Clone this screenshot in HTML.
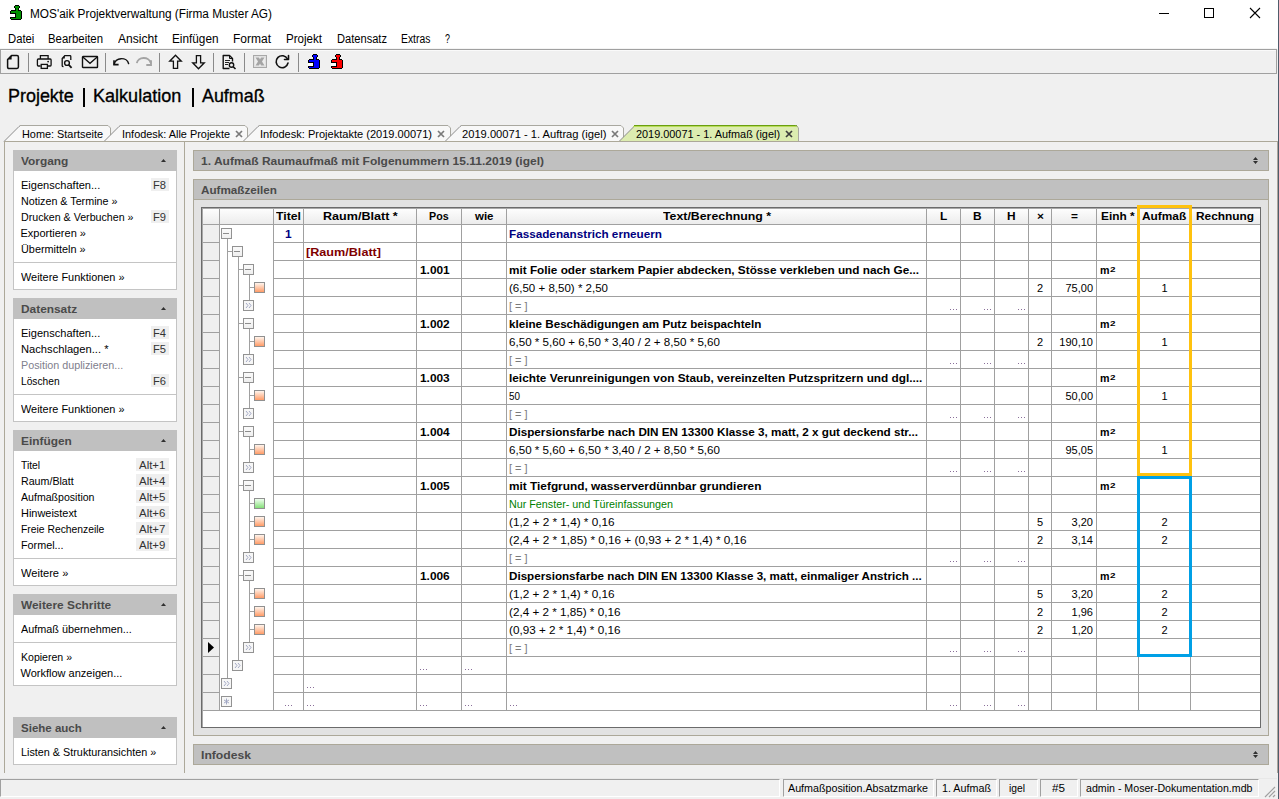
<!DOCTYPE html>
<html><head><meta charset="utf-8"><title>MOS'aik</title>
<style>
html,body{margin:0;padding:0;}
body{width:1279px;height:799px;overflow:hidden;position:relative;background:#f0f0f0;font-family:"Liberation Sans",sans-serif;}
body>div,body>svg{position:absolute;}
.t{white-space:pre;line-height:1;transform-origin:0 0;}
</style></head><body>
<div style="left:0px;top:0px;width:1279px;height:49px;background:#fff"></div>
<div style="left:1278px;top:0px;width:1px;height:799px;background:#4f5c6b"></div>
<svg style="left:10px;top:5px" width="12" height="15" viewBox="0 0 12 15" shape-rendering="crispEdges"><rect x="5" y="0" width="4" height="1" fill="#000"/><rect x="4" y="1" width="1" height="1" fill="#000"/><rect x="5" y="1" width="4" height="1" fill="#009000"/><rect x="9" y="1" width="1" height="1" fill="#000"/><rect x="4" y="2" width="1" height="1" fill="#000"/><rect x="5" y="2" width="4" height="1" fill="#009000"/><rect x="9" y="2" width="1" height="1" fill="#000"/><rect x="5" y="3" width="1" height="1" fill="#000"/><rect x="6" y="3" width="2" height="1" fill="#009000"/><rect x="8" y="3" width="1" height="1" fill="#000"/><rect x="5" y="4" width="1" height="1" fill="#000"/><rect x="6" y="4" width="2" height="1" fill="#009000"/><rect x="8" y="4" width="1" height="1" fill="#000"/><rect x="1" y="5" width="5" height="1" fill="#000"/><rect x="6" y="5" width="2" height="1" fill="#009000"/><rect x="8" y="5" width="3" height="1" fill="#000"/><rect x="0" y="6" width="1" height="1" fill="#000"/><rect x="1" y="6" width="10" height="1" fill="#009000"/><rect x="11" y="6" width="1" height="1" fill="#000"/><rect x="0" y="7" width="1" height="1" fill="#000"/><rect x="1" y="7" width="10" height="1" fill="#009000"/><rect x="11" y="7" width="1" height="1" fill="#000"/><rect x="0" y="8" width="6" height="1" fill="#000"/><rect x="6" y="8" width="5" height="1" fill="#009000"/><rect x="11" y="8" width="1" height="1" fill="#000"/><rect x="0" y="9" width="5" height="1" fill="#fff"/><rect x="5" y="9" width="1" height="1" fill="#000"/><rect x="6" y="9" width="5" height="1" fill="#009000"/><rect x="11" y="9" width="1" height="1" fill="#000"/><rect x="0" y="10" width="5" height="1" fill="#fff"/><rect x="5" y="10" width="1" height="1" fill="#000"/><rect x="6" y="10" width="5" height="1" fill="#009000"/><rect x="11" y="10" width="1" height="1" fill="#000"/><rect x="0" y="11" width="5" height="1" fill="#fff"/><rect x="5" y="11" width="1" height="1" fill="#000"/><rect x="6" y="11" width="5" height="1" fill="#009000"/><rect x="11" y="11" width="1" height="1" fill="#000"/><rect x="0" y="12" width="6" height="1" fill="#000"/><rect x="6" y="12" width="5" height="1" fill="#009000"/><rect x="11" y="12" width="1" height="1" fill="#000"/><rect x="0" y="13" width="1" height="1" fill="#000"/><rect x="1" y="13" width="10" height="1" fill="#009000"/><rect x="11" y="13" width="1" height="1" fill="#000"/><rect x="1" y="14" width="10" height="1" fill="#000"/></svg>
<div class="t" style="left:29.50px;top:8px;font-size:12px;color:#000;transform:scaleX(0.9850);">MOS&#x27;aik Projektverwaltung (Firma Muster AG)</div>
<div style="left:1159px;top:13px;width:10px;height:1px;background:#000"></div>
<div style="left:1204px;top:8px;width:10px;height:10px;border:1px solid #000;box-sizing:border-box"></div>
<svg style="left:1249px;top:7px" width="12" height="12" viewBox="0 0 12 12"><path d="M1 1L11 11M11 1L1 11" stroke="#000" stroke-width="1.1"/></svg>
<div class="t" style="left:7.70px;top:33px;font-size:12px;color:#000;transform:scaleX(0.9388);">Datei</div>
<div class="t" style="left:48.00px;top:33px;font-size:12px;color:#000;transform:scaleX(0.9475);">Bearbeiten</div>
<div class="t" style="left:118.00px;top:33px;font-size:12px;color:#000;transform:scaleX(1.0063);">Ansicht</div>
<div class="t" style="left:172.00px;top:33px;font-size:12px;color:#000;transform:scaleX(0.9815);">Einfügen</div>
<div class="t" style="left:233.00px;top:33px;font-size:12px;color:#000;">Format</div>
<div class="t" style="left:285.60px;top:33px;font-size:12px;color:#000;transform:scaleX(0.9639);">Projekt</div>
<div class="t" style="left:336.90px;top:33px;font-size:12px;color:#000;transform:scaleX(0.9254);">Datensatz</div>
<div class="t" style="left:401.40px;top:33px;font-size:12px;color:#000;transform:scaleX(0.8615);">Extras</div>
<div class="t" style="left:444.80px;top:33px;font-size:12px;color:#000;transform:scaleX(0.7492);">?</div>
<div style="left:0px;top:48px;width:1277px;height:1px;background:#f4f4f4"></div>
<div style="left:0px;top:49px;width:1277px;height:25px;background:#f0f0f0;border:1px solid #a0a0a0;box-sizing:border-box"></div>
<div style="left:1px;top:50px;width:1275px;height:1px;background:#fafafa"></div>
<div style="left:28px;top:53px;width:1px;height:19px;background:#8a8a8a"></div>
<div style="left:105px;top:53px;width:1px;height:19px;background:#8a8a8a"></div>
<div style="left:159px;top:53px;width:1px;height:19px;background:#8a8a8a"></div>
<div style="left:213px;top:53px;width:1px;height:19px;background:#8a8a8a"></div>
<div style="left:244px;top:53px;width:1px;height:19px;background:#8a8a8a"></div>
<div style="left:298px;top:53px;width:1px;height:19px;background:#8a8a8a"></div>
<svg style="left:6px;top:54px" width="16" height="16" viewBox="0 0 16 16"><path d="M5.5 1.6 H11 Q12.4 1.6 12.4 3 V13.1 Q12.4 14.5 11 14.5 H3 Q1.6 14.5 1.6 13.1 V5.5 Z" stroke="#111" stroke-width="1.5" fill="none" stroke-linejoin="round"/><path d="M1.6 5.6 L5.6 1.6 L5.6 5.6 Z" fill="#111"/></svg>
<svg style="left:36px;top:54px" width="17" height="16" viewBox="0 0 17 16"><path d="M4.4 5 V1.6 H12.1 V5" stroke="#111" stroke-width="1.3" fill="none"/><path d="M4.6 12 H2.3 Q1.4 12 1.4 11.1 V5.9 Q1.4 5 2.3 5 H14.2 Q15.1 5 15.1 5.9 V11.1 Q15.1 12 14.2 12 H12" stroke="#111" stroke-width="1.3" fill="none"/><rect x="5.2" y="10.4" width="6.2" height="4" stroke="#111" stroke-width="1.3" fill="none"/><circle cx="12.1" cy="7.6" r="0.9" fill="#111"/></svg>
<svg style="left:60px;top:54px" width="15" height="16" viewBox="0 0 15 16"><path d="M2.2 12 V4.5 L4.8 1.6 H10 Q10.8 1.6 10.8 2.4 V6" stroke="#111" stroke-width="1.3" fill="none"/><path d="M2.2 12 Q2.2 12.6 3.5 12.6" stroke="#111" stroke-width="1.3" fill="none"/><path d="M2.2 4.5 H4.8 V1.6 Z" fill="#111"/><circle cx="7" cy="9" r="2.4" stroke="#111" stroke-width="1.4" fill="none"/><path d="M8.8 10.8 L11.6 13.8" stroke="#111" stroke-width="1.8"/></svg>
<svg style="left:81px;top:55px" width="18" height="14" viewBox="0 0 18 14"><rect x="1.5" y="1.5" width="15" height="11" rx="0.5" stroke="#111" stroke-width="1.4" fill="none"/><path d="M1.8 2 L9 8.3 L16.2 2" stroke="#111" stroke-width="1.3" fill="none"/></svg>
<svg style="left:111px;top:56px" width="20" height="12" viewBox="0 0 20 12"><path d="M3.2 8.3 A7.3 6.3 0 0 1 17.6 7.6" stroke="#111" stroke-width="1.5" fill="none" stroke-linecap="round"/><path d="M3 4.3 V8.6 H7.6" stroke="#111" stroke-width="1.6" fill="none" stroke-linejoin="miter"/></svg>
<svg style="left:134px;top:56px" width="20" height="12" viewBox="0 0 20 12"><path d="M2.8 7.2 A7 6 0 0 1 16.6 6.8" stroke="#a4a4a4" stroke-width="1.8" fill="none"/><path d="M17 4.3 V9 H12.3" stroke="#a4a4a4" stroke-width="1.9" fill="none"/></svg>
<svg style="left:168px;top:54px" width="15" height="16" viewBox="0 0 15 16"><path d="M7.5 1.3 L13.3 7.2 H9.6 V14.4 H5.4 V7.2 H1.7 Z" stroke="#111" stroke-width="1.3" fill="none" stroke-linejoin="miter"/></svg>
<svg style="left:191px;top:54px" width="15" height="16" viewBox="0 0 15 16"><path d="M7.5 14.7 L13.3 8.8 H9.6 V1.6 H5.4 V8.8 H1.7 Z" stroke="#111" stroke-width="1.3" fill="none" stroke-linejoin="miter"/></svg>
<svg style="left:221px;top:54px" width="16" height="16" viewBox="0 0 16 16"><path d="M8.5 14.5 H2.2 V1.5 H8.5 L11.5 4.5 V7.5" stroke="#111" stroke-width="1.4" fill="none" stroke-linejoin="round"/><path d="M8.5 1.5 V4.5 H11.5" stroke="#111" stroke-width="1" fill="none"/><path d="M4 6.5 H9 M4 8.5 H8 M4 10.5 H7" stroke="#222" stroke-width="1"/><circle cx="10.5" cy="11" r="2.2" stroke="#111" stroke-width="1.4" fill="none"/><path d="M12.2 12.7 L14.5 15" stroke="#111" stroke-width="1.6"/></svg>
<svg style="left:252px;top:54px" width="16" height="15" viewBox="0 0 16 15"><rect x="1.5" y="1.5" width="13" height="12" fill="#ececec" stroke="#a8a8a8" stroke-width="1"/><rect x="2.5" y="2.5" width="11" height="10" fill="none" stroke="#e0e0e0" stroke-width="1"/><path d="M3.5 3.5 H7 L8 5.5 L9 3.5 H12.5 L10 7.5 L12.5 11.5 H9 L8 9.5 L7 11.5 H3.5 L6 7.5 Z" fill="#a4a4a4"/></svg>
<svg style="left:274px;top:54px" width="17" height="16" viewBox="0 0 17 16"><path d="M13.5 5 A6 6 0 1 0 14 9" stroke="#111" stroke-width="1.6" fill="none" stroke-linejoin="round" stroke-linecap="round"/><path d="M14.5 1.5 V5.5 H10.5" stroke="#111" stroke-width="1.6" fill="none" stroke-linejoin="round" stroke-linecap="round"/></svg>
<svg style="left:308px;top:54px" width="12" height="15" viewBox="0 0 12 15" shape-rendering="crispEdges"><rect x="5" y="0" width="4" height="1" fill="#000"/><rect x="4" y="1" width="1" height="1" fill="#000"/><rect x="5" y="1" width="4" height="1" fill="#0000ff"/><rect x="9" y="1" width="1" height="1" fill="#000"/><rect x="4" y="2" width="1" height="1" fill="#000"/><rect x="5" y="2" width="4" height="1" fill="#0000ff"/><rect x="9" y="2" width="1" height="1" fill="#000"/><rect x="5" y="3" width="1" height="1" fill="#000"/><rect x="6" y="3" width="2" height="1" fill="#0000ff"/><rect x="8" y="3" width="1" height="1" fill="#000"/><rect x="5" y="4" width="1" height="1" fill="#000"/><rect x="6" y="4" width="2" height="1" fill="#0000ff"/><rect x="8" y="4" width="1" height="1" fill="#000"/><rect x="1" y="5" width="5" height="1" fill="#000"/><rect x="6" y="5" width="2" height="1" fill="#0000ff"/><rect x="8" y="5" width="3" height="1" fill="#000"/><rect x="0" y="6" width="1" height="1" fill="#000"/><rect x="1" y="6" width="10" height="1" fill="#0000ff"/><rect x="11" y="6" width="1" height="1" fill="#000"/><rect x="0" y="7" width="1" height="1" fill="#000"/><rect x="1" y="7" width="10" height="1" fill="#0000ff"/><rect x="11" y="7" width="1" height="1" fill="#000"/><rect x="0" y="8" width="6" height="1" fill="#000"/><rect x="6" y="8" width="5" height="1" fill="#0000ff"/><rect x="11" y="8" width="1" height="1" fill="#000"/><rect x="0" y="9" width="5" height="1" fill="#fff"/><rect x="5" y="9" width="1" height="1" fill="#000"/><rect x="6" y="9" width="5" height="1" fill="#0000ff"/><rect x="11" y="9" width="1" height="1" fill="#000"/><rect x="0" y="10" width="5" height="1" fill="#fff"/><rect x="5" y="10" width="1" height="1" fill="#000"/><rect x="6" y="10" width="5" height="1" fill="#0000ff"/><rect x="11" y="10" width="1" height="1" fill="#000"/><rect x="0" y="11" width="5" height="1" fill="#fff"/><rect x="5" y="11" width="1" height="1" fill="#000"/><rect x="6" y="11" width="5" height="1" fill="#0000ff"/><rect x="11" y="11" width="1" height="1" fill="#000"/><rect x="0" y="12" width="6" height="1" fill="#000"/><rect x="6" y="12" width="5" height="1" fill="#0000ff"/><rect x="11" y="12" width="1" height="1" fill="#000"/><rect x="0" y="13" width="1" height="1" fill="#000"/><rect x="1" y="13" width="10" height="1" fill="#0000ff"/><rect x="11" y="13" width="1" height="1" fill="#000"/><rect x="1" y="14" width="10" height="1" fill="#000"/></svg>
<svg style="left:331px;top:54px" width="12" height="15" viewBox="0 0 12 15" shape-rendering="crispEdges"><rect x="5" y="0" width="4" height="1" fill="#000"/><rect x="4" y="1" width="1" height="1" fill="#000"/><rect x="5" y="1" width="4" height="1" fill="#ff0000"/><rect x="9" y="1" width="1" height="1" fill="#000"/><rect x="4" y="2" width="1" height="1" fill="#000"/><rect x="5" y="2" width="4" height="1" fill="#ff0000"/><rect x="9" y="2" width="1" height="1" fill="#000"/><rect x="5" y="3" width="1" height="1" fill="#000"/><rect x="6" y="3" width="2" height="1" fill="#ff0000"/><rect x="8" y="3" width="1" height="1" fill="#000"/><rect x="5" y="4" width="1" height="1" fill="#000"/><rect x="6" y="4" width="2" height="1" fill="#ff0000"/><rect x="8" y="4" width="1" height="1" fill="#000"/><rect x="1" y="5" width="5" height="1" fill="#000"/><rect x="6" y="5" width="2" height="1" fill="#ff0000"/><rect x="8" y="5" width="3" height="1" fill="#000"/><rect x="0" y="6" width="1" height="1" fill="#000"/><rect x="1" y="6" width="10" height="1" fill="#ff0000"/><rect x="11" y="6" width="1" height="1" fill="#000"/><rect x="0" y="7" width="1" height="1" fill="#000"/><rect x="1" y="7" width="10" height="1" fill="#ff0000"/><rect x="11" y="7" width="1" height="1" fill="#000"/><rect x="0" y="8" width="6" height="1" fill="#000"/><rect x="6" y="8" width="5" height="1" fill="#ff0000"/><rect x="11" y="8" width="1" height="1" fill="#000"/><rect x="0" y="9" width="5" height="1" fill="#fff"/><rect x="5" y="9" width="1" height="1" fill="#000"/><rect x="6" y="9" width="5" height="1" fill="#ff0000"/><rect x="11" y="9" width="1" height="1" fill="#000"/><rect x="0" y="10" width="5" height="1" fill="#fff"/><rect x="5" y="10" width="1" height="1" fill="#000"/><rect x="6" y="10" width="5" height="1" fill="#ff0000"/><rect x="11" y="10" width="1" height="1" fill="#000"/><rect x="0" y="11" width="5" height="1" fill="#fff"/><rect x="5" y="11" width="1" height="1" fill="#000"/><rect x="6" y="11" width="5" height="1" fill="#ff0000"/><rect x="11" y="11" width="1" height="1" fill="#000"/><rect x="0" y="12" width="6" height="1" fill="#000"/><rect x="6" y="12" width="5" height="1" fill="#ff0000"/><rect x="11" y="12" width="1" height="1" fill="#000"/><rect x="0" y="13" width="1" height="1" fill="#000"/><rect x="1" y="13" width="10" height="1" fill="#ff0000"/><rect x="11" y="13" width="1" height="1" fill="#000"/><rect x="1" y="14" width="10" height="1" fill="#000"/></svg>
<div class="t" style="left:7.50px;top:86px;font-size:19px;color:#000;transform:scaleX(0.9440);-webkit-text-stroke:0.35px #000;">Projekte</div>
<div style="left:83px;top:88px;width:2px;height:19px;background:#000"></div>
<div class="t" style="left:93.00px;top:86px;font-size:19px;color:#000;transform:scaleX(0.9499);-webkit-text-stroke:0.35px #000;">Kalkulation</div>
<div style="left:192px;top:88px;width:2px;height:19px;background:#000"></div>
<div class="t" style="left:202.30px;top:86px;font-size:19px;color:#000;transform:scaleX(0.9411);-webkit-text-stroke:0.35px #000;">Aufmaß</div>
<svg style="left:3px;top:124px" width="109" height="18" viewBox="3 124 109 18"><path d="M4 141.5 L19 126.5 L20.5 125.5 L108 125.5 L110.5 128 L110.5 141.5 Z" fill="#f8f8f8" stroke="none"/><path d="M4 141.5 L19 126.5 L20.5 125.5" fill="none" stroke="#8c8c8c" stroke-width="1"/><path d="M20 125.5 L108 125.5" fill="none" stroke="#a9a8a0" stroke-width="1"/><path d="M108 125.5 L110.5 128 L110.5 141.5" fill="none" stroke="#a9a8a0" stroke-width="1"/></svg>
<div class="t" style="left:22.00px;top:129px;font-size:11px;color:#000;transform:scaleX(0.9887);">Home: Startseite</div>
<svg style="left:103px;top:124px" width="146" height="18" viewBox="103 124 146 18"><path d="M104 141.5 L119 126.5 L120.5 125.5 L245 125.5 L247.5 128 L247.5 141.5 Z" fill="#f8f8f8" stroke="none"/><path d="M104 141.5 L119 126.5 L120.5 125.5" fill="none" stroke="#8c8c8c" stroke-width="1"/><path d="M120 125.5 L245 125.5" fill="none" stroke="#a9a8a0" stroke-width="1"/><path d="M245 125.5 L247.5 128 L247.5 141.5" fill="none" stroke="#a9a8a0" stroke-width="1"/></svg>
<div class="t" style="left:122.00px;top:129px;font-size:11px;color:#000;transform:scaleX(0.9923);">Infodesk: Alle Projekte</div>
<svg style="left:235px;top:130px" width="8" height="8" viewBox="0 0 8 8"><path d="M1 1L7 7M7 1L1 7" stroke="#7a7a7a" stroke-width="1.7"/></svg>
<svg style="left:242px;top:124px" width="210" height="18" viewBox="242 124 210 18"><path d="M243 141.5 L258 126.5 L259.5 125.5 L448 125.5 L450.5 128 L450.5 141.5 Z" fill="#f8f8f8" stroke="none"/><path d="M243 141.5 L258 126.5 L259.5 125.5" fill="none" stroke="#8c8c8c" stroke-width="1"/><path d="M259 125.5 L448 125.5" fill="none" stroke="#a9a8a0" stroke-width="1"/><path d="M448 125.5 L450.5 128 L450.5 141.5" fill="none" stroke="#a9a8a0" stroke-width="1"/></svg>
<div class="t" style="left:260.00px;top:129px;font-size:11px;color:#000;transform:scaleX(1.0045);">Infodesk: Projektakte (2019.00071)</div>
<svg style="left:437px;top:130px" width="8" height="8" viewBox="0 0 8 8"><path d="M1 1L7 7M7 1L1 7" stroke="#7a7a7a" stroke-width="1.7"/></svg>
<svg style="left:444px;top:124px" width="181" height="18" viewBox="444 124 181 18"><path d="M445 141.5 L460 126.5 L461.5 125.5 L621 125.5 L623.5 128 L623.5 141.5 Z" fill="#f8f8f8" stroke="none"/><path d="M445 141.5 L460 126.5 L461.5 125.5" fill="none" stroke="#8c8c8c" stroke-width="1"/><path d="M461 125.5 L621 125.5" fill="none" stroke="#a9a8a0" stroke-width="1"/><path d="M621 125.5 L623.5 128 L623.5 141.5" fill="none" stroke="#a9a8a0" stroke-width="1"/></svg>
<div class="t" style="left:462.00px;top:129px;font-size:11px;color:#000;transform:scaleX(1.0134);">2019.00071 - 1. Auftrag (igel)</div>
<svg style="left:611px;top:130px" width="8" height="8" viewBox="0 0 8 8"><path d="M1 1L7 7M7 1L1 7" stroke="#7a7a7a" stroke-width="1.7"/></svg>
<svg style="left:618px;top:124px" width="182" height="18" viewBox="618 124 182 18"><path d="M619 141.5 L634 126.5 L635.5 125.5 L796 125.5 L798.5 128 L798.5 141.5 Z" fill="#dcecb0" stroke="none"/><path d="M619 141.5 L634 126.5 L635.5 125.5" fill="none" stroke="#8c8c8c" stroke-width="1"/><path d="M634 125.5 L797 125.5" stroke="#6a9e10" stroke-width="1"/><path d="M633 126.5 L798 126.5" stroke="#b8dc58" stroke-width="1"/><path d="M796 125.5 L798.5 128 L798.5 141.5" fill="none" stroke="#a8a8a0" stroke-width="1"/></svg>
<div class="t" style="left:636.00px;top:129px;font-size:11px;color:#000;transform:scaleX(0.9895);">2019.00071 - 1. Aufmaß (igel)</div>
<svg style="left:785px;top:130px" width="8" height="8" viewBox="0 0 8 8"><path d="M1 1L7 7M7 1L1 7" stroke="#3c3c3c" stroke-width="1.7"/></svg>
<div style="left:4px;top:141px;width:1274px;height:1px;background:#aca899"></div>
<div style="left:4px;top:141px;width:1px;height:632px;background:#aca899"></div>
<div style="left:1277px;top:141px;width:1px;height:632px;background:#aea69d"></div>
<div style="left:184px;top:141px;width:1px;height:632px;background:#aca899"></div>
<div style="left:13px;top:150px;width:164px;height:21px;background:#c0c0c0"></div>
<div class="t" style="left:21.00px;top:156px;font-size:11px;font-weight:bold;color:#4a4a4a;transform:scaleX(1.0800);">Vorgang</div>
<svg style="left:161px;top:159px" width="5" height="3" viewBox="0 0 5 3"><path d="M0 3 L2.5 0 L5 3 Z" fill="#303030"/></svg>
<div style="left:13px;top:171px;width:164px;height:119px;background:#fff;border:1px solid #c4c4c4;border-top:none;box-sizing:border-box"></div>
<div class="t" style="left:20.50px;top:180px;font-size:11px;color:#000;transform:scaleX(1.0040);">Eigenschaften...</div>
<div style="left:151px;top:178px;width:18px;height:13px;background:#efefef"></div>
<div class="t" style="left:153.00px;top:180px;font-size:11px;color:#333;transform:scaleX(1.0127);">F8</div>
<div class="t" style="left:20.50px;top:196px;font-size:11px;color:#000;transform:scaleX(0.9752);">Notizen &amp; Termine »</div>
<div class="t" style="left:20.50px;top:212px;font-size:11px;color:#000;transform:scaleX(0.9683);">Drucken &amp; Verbuchen »</div>
<div style="left:151px;top:210px;width:18px;height:13px;background:#efefef"></div>
<div class="t" style="left:153.00px;top:212px;font-size:11px;color:#333;transform:scaleX(1.0127);">F9</div>
<div class="t" style="left:20.50px;top:228px;font-size:11px;color:#000;">Exportieren »</div>
<div class="t" style="left:20.50px;top:244px;font-size:11px;color:#000;transform:scaleX(0.9875);">Übermitteln »</div>
<div style="left:14px;top:262px;width:162px;height:1px;background:#c4c4c4"></div>
<div class="t" style="left:20.50px;top:272px;font-size:11px;color:#000;transform:scaleX(0.9918);">Weitere Funktionen »</div>
<div style="left:13px;top:298px;width:164px;height:21px;background:#c0c0c0"></div>
<div class="t" style="left:21.00px;top:304px;font-size:11px;font-weight:bold;color:#4a4a4a;transform:scaleX(1.0800);">Datensatz</div>
<svg style="left:161px;top:307px" width="5" height="3" viewBox="0 0 5 3"><path d="M0 3 L2.5 0 L5 3 Z" fill="#303030"/></svg>
<div style="left:13px;top:319px;width:164px;height:103px;background:#fff;border:1px solid #c4c4c4;border-top:none;box-sizing:border-box"></div>
<div class="t" style="left:20.50px;top:328px;font-size:11px;color:#000;transform:scaleX(1.0040);">Eigenschaften...</div>
<div style="left:151px;top:326px;width:18px;height:13px;background:#efefef"></div>
<div class="t" style="left:153.00px;top:328px;font-size:11px;color:#333;transform:scaleX(1.0127);">F4</div>
<div class="t" style="left:20.50px;top:344px;font-size:11px;color:#000;transform:scaleX(1.0149);">Nachschlagen... *</div>
<div style="left:151px;top:342px;width:18px;height:13px;background:#efefef"></div>
<div class="t" style="left:153.00px;top:344px;font-size:11px;color:#333;transform:scaleX(1.0127);">F5</div>
<div class="t" style="left:20.50px;top:360px;font-size:11px;color:#80808c;transform:scaleX(0.9774);">Position duplizieren...</div>
<div class="t" style="left:20.50px;top:376px;font-size:11px;color:#000;transform:scaleX(0.9281);">Löschen</div>
<div style="left:151px;top:374px;width:18px;height:13px;background:#efefef"></div>
<div class="t" style="left:153.00px;top:376px;font-size:11px;color:#333;transform:scaleX(1.0127);">F6</div>
<div style="left:14px;top:394px;width:162px;height:1px;background:#c4c4c4"></div>
<div class="t" style="left:20.50px;top:404px;font-size:11px;color:#000;transform:scaleX(0.9918);">Weitere Funktionen »</div>
<div style="left:13px;top:430px;width:164px;height:21px;background:#c0c0c0"></div>
<div class="t" style="left:21.00px;top:436px;font-size:11px;font-weight:bold;color:#4a4a4a;transform:scaleX(1.0800);">Einfügen</div>
<svg style="left:161px;top:439px" width="5" height="3" viewBox="0 0 5 3"><path d="M0 3 L2.5 0 L5 3 Z" fill="#303030"/></svg>
<div style="left:13px;top:451px;width:164px;height:135px;background:#fff;border:1px solid #c4c4c4;border-top:none;box-sizing:border-box"></div>
<div class="t" style="left:20.50px;top:460px;font-size:11px;color:#000;transform:scaleX(0.9375);">Titel</div>
<div style="left:136px;top:458px;width:33px;height:13px;background:#efefef"></div>
<div class="t" style="left:139.00px;top:460px;font-size:11px;color:#333;transform:scaleX(1.0402);">Alt+1</div>
<div class="t" style="left:20.50px;top:476px;font-size:11px;color:#000;transform:scaleX(0.9686);">Raum/Blatt</div>
<div style="left:136px;top:474px;width:33px;height:13px;background:#efefef"></div>
<div class="t" style="left:139.00px;top:476px;font-size:11px;color:#333;transform:scaleX(1.0402);">Alt+4</div>
<div class="t" style="left:20.50px;top:492px;font-size:11px;color:#000;transform:scaleX(0.9617);">Aufmaßposition</div>
<div style="left:136px;top:490px;width:33px;height:13px;background:#efefef"></div>
<div class="t" style="left:139.00px;top:492px;font-size:11px;color:#333;transform:scaleX(1.0402);">Alt+5</div>
<div class="t" style="left:20.50px;top:508px;font-size:11px;color:#000;transform:scaleX(0.9939);">Hinweistext</div>
<div style="left:136px;top:506px;width:33px;height:13px;background:#efefef"></div>
<div class="t" style="left:139.00px;top:508px;font-size:11px;color:#333;transform:scaleX(1.0402);">Alt+6</div>
<div class="t" style="left:20.50px;top:524px;font-size:11px;color:#000;transform:scaleX(0.9396);">Freie Rechenzeile</div>
<div style="left:136px;top:522px;width:33px;height:13px;background:#efefef"></div>
<div class="t" style="left:139.00px;top:524px;font-size:11px;color:#333;transform:scaleX(1.0402);">Alt+7</div>
<div class="t" style="left:20.50px;top:540px;font-size:11px;color:#000;transform:scaleX(0.9817);">Formel...</div>
<div style="left:136px;top:538px;width:33px;height:13px;background:#efefef"></div>
<div class="t" style="left:139.00px;top:540px;font-size:11px;color:#333;transform:scaleX(1.0402);">Alt+9</div>
<div style="left:14px;top:558px;width:162px;height:1px;background:#c4c4c4"></div>
<div class="t" style="left:20.50px;top:568px;font-size:11px;color:#000;transform:scaleX(1.0091);">Weitere »</div>
<div style="left:13px;top:594px;width:164px;height:21px;background:#c0c0c0"></div>
<div class="t" style="left:21.00px;top:600px;font-size:11px;font-weight:bold;color:#4a4a4a;transform:scaleX(1.0800);">Weitere Schritte</div>
<svg style="left:161px;top:603px" width="5" height="3" viewBox="0 0 5 3"><path d="M0 3 L2.5 0 L5 3 Z" fill="#303030"/></svg>
<div style="left:13px;top:615px;width:164px;height:71px;background:#fff;border:1px solid #c4c4c4;border-top:none;box-sizing:border-box"></div>
<div class="t" style="left:20.50px;top:624px;font-size:11px;color:#000;transform:scaleX(0.9848);">Aufmaß übernehmen...</div>
<div style="left:14px;top:642px;width:162px;height:1px;background:#c4c4c4"></div>
<div class="t" style="left:20.50px;top:652px;font-size:11px;color:#000;transform:scaleX(0.9585);">Kopieren »</div>
<div class="t" style="left:20.50px;top:668px;font-size:11px;color:#000;">Workflow anzeigen...</div>
<div style="left:13px;top:717px;width:164px;height:21px;background:#c0c0c0"></div>
<div class="t" style="left:21.00px;top:723px;font-size:11px;font-weight:bold;color:#4a4a4a;transform:scaleX(1.0468);">Siehe auch</div>
<svg style="left:161px;top:726px" width="5" height="3" viewBox="0 0 5 3"><path d="M0 3 L2.5 0 L5 3 Z" fill="#303030"/></svg>
<div style="left:13px;top:738px;width:164px;height:27px;background:#fff;border:1px solid #c4c4c4;border-top:none;box-sizing:border-box"></div>
<div class="t" style="left:20.50px;top:747px;font-size:11px;color:#000;transform:scaleX(0.9827);">Listen &amp; Strukturansichten »</div>
<div style="left:193px;top:150px;width:1076px;height:21px;background:#c0c0c0;border:1px solid #aca899;box-sizing:border-box"></div>
<div class="t" style="left:201.00px;top:156px;font-size:11px;font-weight:bold;color:#4a4a4a;transform:scaleX(1.0910);">1. Aufmaß Raumaufmaß mit Folgenummern 15.11.2019 (igel)</div>
<svg style="left:1253px;top:157px" width="5" height="7" viewBox="0 0 5 7"><path d="M0 3 L2.5 0 L5 3 Z M0 4 L2.5 7 L5 4 Z" fill="#303030"/></svg>
<div style="left:193px;top:179px;width:1076px;height:557px;background:#e2e2e2;border:1px solid #aca899;box-sizing:border-box"></div>
<div style="left:194px;top:180px;width:1074px;height:20px;background:#c0c0c0;border-bottom:1px solid #aca899;box-sizing:border-box"></div>
<div class="t" style="left:201.00px;top:185px;font-size:11px;font-weight:bold;color:#4a4a4a;transform:scaleX(1.0628);">Aufmaßzeilen</div>
<div style="left:193px;top:744px;width:1076px;height:21px;background:#c0c0c0;border:1px solid #aca899;box-sizing:border-box"></div>
<div class="t" style="left:201.00px;top:750px;font-size:11px;font-weight:bold;color:#4a4a4a;transform:scaleX(1.1054);">Infodesk</div>
<svg style="left:1253px;top:751px" width="5" height="7" viewBox="0 0 5 7"><path d="M0 3 L2.5 0 L5 3 Z M0 4 L2.5 7 L5 4 Z" fill="#303030"/></svg>
<div style="left:201px;top:207px;width:1060px;height:521px;background:#fff"></div>
<div style="left:203px;top:209px;width:1057px;height:15px;background:linear-gradient(#fdfdfd,#ececec)"></div>
<div style="left:203px;top:225px;width:16px;height:485px;background:#efefef"></div>
<div style="left:203px;top:224px;width:1057px;height:1px;background:#a0a0a0"></div>
<div style="left:203px;top:242px;width:17px;height:1px;background:#a0a0a0"></div>
<div style="left:273px;top:242px;width:987px;height:1px;background:#a0a0a0"></div>
<div style="left:203px;top:260px;width:17px;height:1px;background:#a0a0a0"></div>
<div style="left:273px;top:260px;width:987px;height:1px;background:#a0a0a0"></div>
<div style="left:203px;top:278px;width:17px;height:1px;background:#a0a0a0"></div>
<div style="left:273px;top:278px;width:987px;height:1px;background:#a0a0a0"></div>
<div style="left:203px;top:296px;width:17px;height:1px;background:#a0a0a0"></div>
<div style="left:273px;top:296px;width:987px;height:1px;background:#a0a0a0"></div>
<div style="left:203px;top:314px;width:17px;height:1px;background:#a0a0a0"></div>
<div style="left:273px;top:314px;width:987px;height:1px;background:#a0a0a0"></div>
<div style="left:203px;top:332px;width:17px;height:1px;background:#a0a0a0"></div>
<div style="left:273px;top:332px;width:987px;height:1px;background:#a0a0a0"></div>
<div style="left:203px;top:350px;width:17px;height:1px;background:#a0a0a0"></div>
<div style="left:273px;top:350px;width:987px;height:1px;background:#a0a0a0"></div>
<div style="left:203px;top:368px;width:17px;height:1px;background:#a0a0a0"></div>
<div style="left:273px;top:368px;width:987px;height:1px;background:#a0a0a0"></div>
<div style="left:203px;top:386px;width:17px;height:1px;background:#a0a0a0"></div>
<div style="left:273px;top:386px;width:987px;height:1px;background:#a0a0a0"></div>
<div style="left:203px;top:404px;width:17px;height:1px;background:#a0a0a0"></div>
<div style="left:273px;top:404px;width:987px;height:1px;background:#a0a0a0"></div>
<div style="left:203px;top:422px;width:17px;height:1px;background:#a0a0a0"></div>
<div style="left:273px;top:422px;width:987px;height:1px;background:#a0a0a0"></div>
<div style="left:203px;top:440px;width:17px;height:1px;background:#a0a0a0"></div>
<div style="left:273px;top:440px;width:987px;height:1px;background:#a0a0a0"></div>
<div style="left:203px;top:458px;width:17px;height:1px;background:#a0a0a0"></div>
<div style="left:273px;top:458px;width:987px;height:1px;background:#a0a0a0"></div>
<div style="left:203px;top:476px;width:17px;height:1px;background:#a0a0a0"></div>
<div style="left:273px;top:476px;width:987px;height:1px;background:#a0a0a0"></div>
<div style="left:203px;top:494px;width:17px;height:1px;background:#a0a0a0"></div>
<div style="left:273px;top:494px;width:987px;height:1px;background:#a0a0a0"></div>
<div style="left:203px;top:512px;width:17px;height:1px;background:#a0a0a0"></div>
<div style="left:273px;top:512px;width:987px;height:1px;background:#a0a0a0"></div>
<div style="left:203px;top:530px;width:17px;height:1px;background:#a0a0a0"></div>
<div style="left:273px;top:530px;width:987px;height:1px;background:#a0a0a0"></div>
<div style="left:203px;top:548px;width:17px;height:1px;background:#a0a0a0"></div>
<div style="left:273px;top:548px;width:987px;height:1px;background:#a0a0a0"></div>
<div style="left:203px;top:566px;width:17px;height:1px;background:#a0a0a0"></div>
<div style="left:273px;top:566px;width:987px;height:1px;background:#a0a0a0"></div>
<div style="left:203px;top:584px;width:17px;height:1px;background:#a0a0a0"></div>
<div style="left:273px;top:584px;width:987px;height:1px;background:#a0a0a0"></div>
<div style="left:203px;top:602px;width:17px;height:1px;background:#a0a0a0"></div>
<div style="left:273px;top:602px;width:987px;height:1px;background:#a0a0a0"></div>
<div style="left:203px;top:620px;width:17px;height:1px;background:#a0a0a0"></div>
<div style="left:273px;top:620px;width:987px;height:1px;background:#a0a0a0"></div>
<div style="left:203px;top:638px;width:17px;height:1px;background:#a0a0a0"></div>
<div style="left:273px;top:638px;width:987px;height:1px;background:#a0a0a0"></div>
<div style="left:203px;top:656px;width:17px;height:1px;background:#a0a0a0"></div>
<div style="left:273px;top:656px;width:987px;height:1px;background:#a0a0a0"></div>
<div style="left:203px;top:674px;width:17px;height:1px;background:#a0a0a0"></div>
<div style="left:273px;top:674px;width:987px;height:1px;background:#a0a0a0"></div>
<div style="left:203px;top:692px;width:17px;height:1px;background:#a0a0a0"></div>
<div style="left:273px;top:692px;width:987px;height:1px;background:#a0a0a0"></div>
<div style="left:203px;top:710px;width:1057px;height:1px;background:#a0a0a0"></div>
<div style="left:219px;top:209px;width:1px;height:502px;background:#a0a0a0"></div>
<div style="left:273px;top:209px;width:1px;height:502px;background:#a0a0a0"></div>
<div style="left:303px;top:209px;width:1px;height:502px;background:#a0a0a0"></div>
<div style="left:416px;top:209px;width:1px;height:502px;background:#a0a0a0"></div>
<div style="left:461px;top:209px;width:1px;height:502px;background:#a0a0a0"></div>
<div style="left:506px;top:209px;width:1px;height:502px;background:#a0a0a0"></div>
<div style="left:926px;top:209px;width:1px;height:502px;background:#a0a0a0"></div>
<div style="left:960px;top:209px;width:1px;height:502px;background:#a0a0a0"></div>
<div style="left:994px;top:209px;width:1px;height:502px;background:#a0a0a0"></div>
<div style="left:1028px;top:209px;width:1px;height:502px;background:#a0a0a0"></div>
<div style="left:1051px;top:209px;width:1px;height:502px;background:#a0a0a0"></div>
<div style="left:1096px;top:209px;width:1px;height:502px;background:#a0a0a0"></div>
<div style="left:1138px;top:209px;width:1px;height:502px;background:#a0a0a0"></div>
<div style="left:1190px;top:209px;width:1px;height:502px;background:#a0a0a0"></div>
<div style="left:201px;top:207px;width:1px;height:521px;background:#6b6b6b"></div>
<div style="left:202px;top:208px;width:1px;height:520px;background:#a8a8a8"></div>
<div style="left:201px;top:207px;width:1060px;height:1px;background:#6b6b6b"></div>
<div style="left:202px;top:208px;width:1059px;height:1px;background:#a8a8a8"></div>
<div style="left:1260px;top:207px;width:1px;height:521px;background:#6b6b6b"></div>
<div style="left:201px;top:727px;width:1060px;height:1px;background:#6b6b6b"></div>
<div class="t" style="left:276.00px;top:211px;font-size:11px;font-weight:bold;color:#000;transform:scaleX(1.1154);">Titel</div>
<div class="t" style="left:322.65px;top:211px;font-size:11px;font-weight:bold;color:#000;transform:scaleX(1.1422);">Raum/Blatt *</div>
<div class="t" style="left:429.20px;top:211px;font-size:11px;font-weight:bold;color:#000;transform:scaleX(0.9715);">Pos</div>
<div class="t" style="left:474.75px;top:211px;font-size:11px;font-weight:bold;color:#000;transform:scaleX(1.0434);">wie</div>
<div class="t" style="left:662.50px;top:211px;font-size:11px;font-weight:bold;color:#000;transform:scaleX(1.1207);">Text/Berechnung *</div>
<div class="t" style="left:939.87px;top:211px;font-size:11px;font-weight:bold;color:#000;transform:scaleX(1.0800);">L</div>
<div class="t" style="left:973.21px;top:211px;font-size:11px;font-weight:bold;color:#000;transform:scaleX(1.0800);">B</div>
<div class="t" style="left:1007.21px;top:211px;font-size:11px;font-weight:bold;color:#000;transform:scaleX(1.0800);">H</div>
<div class="t" style="left:1036.53px;top:211px;font-size:11px;font-weight:bold;color:#000;transform:scaleX(1.0800);">×</div>
<div class="t" style="left:1070.53px;top:211px;font-size:11px;font-weight:bold;color:#000;transform:scaleX(1.0800);">=</div>
<div class="t" style="left:1100.67px;top:211px;font-size:11px;font-weight:bold;color:#000;transform:scaleX(1.0800);">Einh *</div>
<div class="t" style="left:1142.39px;top:211px;font-size:11px;font-weight:bold;color:#000;transform:scaleX(1.0800);">Aufmaß</div>
<div class="t" style="left:1195.96px;top:211px;font-size:11px;font-weight:bold;color:#000;transform:scaleX(1.0800);">Rechnung</div>
<div style="left:227px;top:239px;width:1px;height:439px;background:#a0a0a0"></div>
<div style="left:238px;top:257px;width:1px;height:403px;background:#a0a0a0"></div>
<div style="left:227px;top:251px;width:5px;height:1px;background:#a0a0a0"></div>
<div style="left:238px;top:269px;width:5px;height:1px;background:#a0a0a0"></div>
<div style="left:249px;top:275px;width:1px;height:25px;background:#a0a0a0"></div>
<div style="left:249px;top:287px;width:5px;height:1px;background:#a0a0a0"></div>
<div style="left:243px;top:264px;width:11px;height:11px;background:linear-gradient(#fafafa,#efefef);border:1px solid #929292;box-sizing:border-box"></div>
<div style="left:245px;top:269px;width:6px;height:1px;background:#8c8c8c"></div>
<div style="left:243px;top:300px;width:11px;height:11px;background:#f6f6f6;border:1px solid #929292;box-sizing:border-box"></div>
<svg style="left:245px;top:302px" width="7" height="7" viewBox="0 0 7 7"><path d="M1 1 L3 3.5 L1 6 M4 1 L6 3.5 L4 6" stroke="#9aa0c0" stroke-width="0.9" fill="none"/></svg>
<div style="left:254px;top:282px;width:11px;height:11px;background:linear-gradient(#fff4ec,#ff9c68);border:1px solid #909090;box-sizing:border-box"></div>
<div style="left:238px;top:323px;width:5px;height:1px;background:#a0a0a0"></div>
<div style="left:249px;top:329px;width:1px;height:25px;background:#a0a0a0"></div>
<div style="left:249px;top:341px;width:5px;height:1px;background:#a0a0a0"></div>
<div style="left:243px;top:318px;width:11px;height:11px;background:linear-gradient(#fafafa,#efefef);border:1px solid #929292;box-sizing:border-box"></div>
<div style="left:245px;top:323px;width:6px;height:1px;background:#8c8c8c"></div>
<div style="left:243px;top:354px;width:11px;height:11px;background:#f6f6f6;border:1px solid #929292;box-sizing:border-box"></div>
<svg style="left:245px;top:356px" width="7" height="7" viewBox="0 0 7 7"><path d="M1 1 L3 3.5 L1 6 M4 1 L6 3.5 L4 6" stroke="#9aa0c0" stroke-width="0.9" fill="none"/></svg>
<div style="left:254px;top:336px;width:11px;height:11px;background:linear-gradient(#fff4ec,#ff9c68);border:1px solid #909090;box-sizing:border-box"></div>
<div style="left:238px;top:377px;width:5px;height:1px;background:#a0a0a0"></div>
<div style="left:249px;top:383px;width:1px;height:25px;background:#a0a0a0"></div>
<div style="left:249px;top:395px;width:5px;height:1px;background:#a0a0a0"></div>
<div style="left:243px;top:372px;width:11px;height:11px;background:linear-gradient(#fafafa,#efefef);border:1px solid #929292;box-sizing:border-box"></div>
<div style="left:245px;top:377px;width:6px;height:1px;background:#8c8c8c"></div>
<div style="left:243px;top:408px;width:11px;height:11px;background:#f6f6f6;border:1px solid #929292;box-sizing:border-box"></div>
<svg style="left:245px;top:410px" width="7" height="7" viewBox="0 0 7 7"><path d="M1 1 L3 3.5 L1 6 M4 1 L6 3.5 L4 6" stroke="#9aa0c0" stroke-width="0.9" fill="none"/></svg>
<div style="left:254px;top:390px;width:11px;height:11px;background:linear-gradient(#fff4ec,#ff9c68);border:1px solid #909090;box-sizing:border-box"></div>
<div style="left:238px;top:431px;width:5px;height:1px;background:#a0a0a0"></div>
<div style="left:249px;top:437px;width:1px;height:25px;background:#a0a0a0"></div>
<div style="left:249px;top:449px;width:5px;height:1px;background:#a0a0a0"></div>
<div style="left:243px;top:426px;width:11px;height:11px;background:linear-gradient(#fafafa,#efefef);border:1px solid #929292;box-sizing:border-box"></div>
<div style="left:245px;top:431px;width:6px;height:1px;background:#8c8c8c"></div>
<div style="left:243px;top:462px;width:11px;height:11px;background:#f6f6f6;border:1px solid #929292;box-sizing:border-box"></div>
<svg style="left:245px;top:464px" width="7" height="7" viewBox="0 0 7 7"><path d="M1 1 L3 3.5 L1 6 M4 1 L6 3.5 L4 6" stroke="#9aa0c0" stroke-width="0.9" fill="none"/></svg>
<div style="left:254px;top:444px;width:11px;height:11px;background:linear-gradient(#fff4ec,#ff9c68);border:1px solid #909090;box-sizing:border-box"></div>
<div style="left:238px;top:485px;width:5px;height:1px;background:#a0a0a0"></div>
<div style="left:249px;top:491px;width:1px;height:61px;background:#a0a0a0"></div>
<div style="left:249px;top:503px;width:5px;height:1px;background:#a0a0a0"></div>
<div style="left:249px;top:521px;width:5px;height:1px;background:#a0a0a0"></div>
<div style="left:249px;top:539px;width:5px;height:1px;background:#a0a0a0"></div>
<div style="left:243px;top:480px;width:11px;height:11px;background:linear-gradient(#fafafa,#efefef);border:1px solid #929292;box-sizing:border-box"></div>
<div style="left:245px;top:485px;width:6px;height:1px;background:#8c8c8c"></div>
<div style="left:243px;top:552px;width:11px;height:11px;background:#f6f6f6;border:1px solid #929292;box-sizing:border-box"></div>
<svg style="left:245px;top:554px" width="7" height="7" viewBox="0 0 7 7"><path d="M1 1 L3 3.5 L1 6 M4 1 L6 3.5 L4 6" stroke="#9aa0c0" stroke-width="0.9" fill="none"/></svg>
<div style="left:254px;top:498px;width:11px;height:11px;background:linear-gradient(#f0fff0,#86e07a);border:1px solid #909090;box-sizing:border-box"></div>
<div style="left:254px;top:516px;width:11px;height:11px;background:linear-gradient(#fff4ec,#ff9c68);border:1px solid #909090;box-sizing:border-box"></div>
<div style="left:254px;top:534px;width:11px;height:11px;background:linear-gradient(#fff4ec,#ff9c68);border:1px solid #909090;box-sizing:border-box"></div>
<div style="left:238px;top:575px;width:5px;height:1px;background:#a0a0a0"></div>
<div style="left:249px;top:581px;width:1px;height:61px;background:#a0a0a0"></div>
<div style="left:249px;top:593px;width:5px;height:1px;background:#a0a0a0"></div>
<div style="left:249px;top:611px;width:5px;height:1px;background:#a0a0a0"></div>
<div style="left:249px;top:629px;width:5px;height:1px;background:#a0a0a0"></div>
<div style="left:243px;top:570px;width:11px;height:11px;background:linear-gradient(#fafafa,#efefef);border:1px solid #929292;box-sizing:border-box"></div>
<div style="left:245px;top:575px;width:6px;height:1px;background:#8c8c8c"></div>
<div style="left:243px;top:642px;width:11px;height:11px;background:#f6f6f6;border:1px solid #929292;box-sizing:border-box"></div>
<svg style="left:245px;top:644px" width="7" height="7" viewBox="0 0 7 7"><path d="M1 1 L3 3.5 L1 6 M4 1 L6 3.5 L4 6" stroke="#9aa0c0" stroke-width="0.9" fill="none"/></svg>
<div style="left:254px;top:588px;width:11px;height:11px;background:linear-gradient(#fff4ec,#ff9c68);border:1px solid #909090;box-sizing:border-box"></div>
<div style="left:254px;top:606px;width:11px;height:11px;background:linear-gradient(#fff4ec,#ff9c68);border:1px solid #909090;box-sizing:border-box"></div>
<div style="left:254px;top:624px;width:11px;height:11px;background:linear-gradient(#fff4ec,#ff9c68);border:1px solid #909090;box-sizing:border-box"></div>
<div style="left:221px;top:228px;width:11px;height:11px;background:linear-gradient(#fafafa,#efefef);border:1px solid #929292;box-sizing:border-box"></div>
<div style="left:223px;top:233px;width:6px;height:1px;background:#8c8c8c"></div>
<div style="left:232px;top:246px;width:11px;height:11px;background:linear-gradient(#fafafa,#efefef);border:1px solid #929292;box-sizing:border-box"></div>
<div style="left:234px;top:251px;width:6px;height:1px;background:#8c8c8c"></div>
<div style="left:232px;top:660px;width:11px;height:11px;background:#f6f6f6;border:1px solid #929292;box-sizing:border-box"></div>
<svg style="left:234px;top:662px" width="7" height="7" viewBox="0 0 7 7"><path d="M1 1 L3 3.5 L1 6 M4 1 L6 3.5 L4 6" stroke="#9aa0c0" stroke-width="0.9" fill="none"/></svg>
<div style="left:221px;top:678px;width:11px;height:11px;background:#f6f6f6;border:1px solid #929292;box-sizing:border-box"></div>
<svg style="left:223px;top:680px" width="7" height="7" viewBox="0 0 7 7"><path d="M1 1 L3 3.5 L1 6 M4 1 L6 3.5 L4 6" stroke="#9aa0c0" stroke-width="0.9" fill="none"/></svg>
<div style="left:221px;top:696px;width:11px;height:11px;background:#f6f6f6;border:1px solid #929292;box-sizing:border-box"></div>
<svg style="left:223px;top:698px" width="7" height="7" viewBox="0 0 7 7"><path d="M3.5 0.5 V6.5 M1 2 L6 5 M6 2 L1 5" stroke="#9aa0c0" stroke-width="0.9" fill="none"/></svg>
<svg style="left:207px;top:642px" width="8" height="11" viewBox="0 0 8 11"><path d="M1 0 L7 5.5 L1 11 Z" fill="#000"/></svg>
<div class="t" style="left:285.20px;top:229px;font-size:11px;font-weight:bold;color:#00007f;transform:scaleX(1.0800);">1</div>
<div class="t" style="left:509.00px;top:229px;font-size:11px;font-weight:bold;color:#00007f;transform:scaleX(1.0649);">Fassadenanstrich erneuern</div>
<div class="t" style="left:306.00px;top:247px;font-size:11px;font-weight:bold;color:#7f0000;transform:scaleX(1.1470);">[Raum/Blatt]</div>
<div class="t" style="left:420.00px;top:265px;font-size:11px;font-weight:bold;color:#000;transform:scaleX(1.0800);">1.001</div>
<div class="t" style="left:509.00px;top:265px;font-size:11px;font-weight:bold;color:#000;transform:scaleX(1.0696);">mit Folie oder starkem Papier abdecken, Stösse verkleben und nach Ge...</div>
<div class="t" style="left:1099.50px;top:265px;font-size:11px;font-weight:bold;color:#000;transform:scaleX(0.9713);">m</div>
<div class="t" style="left:1110.00px;top:266px;font-size:7px;font-weight:bold;color:#000;transform:scaleX(1.4127);">2</div>
<div class="t" style="left:420.00px;top:319px;font-size:11px;font-weight:bold;color:#000;transform:scaleX(1.0800);">1.002</div>
<div class="t" style="left:509.00px;top:319px;font-size:11px;font-weight:bold;color:#000;transform:scaleX(1.0587);">kleine Beschädigungen am Putz beispachteln</div>
<div class="t" style="left:1099.50px;top:319px;font-size:11px;font-weight:bold;color:#000;transform:scaleX(0.9713);">m</div>
<div class="t" style="left:1110.00px;top:320px;font-size:7px;font-weight:bold;color:#000;transform:scaleX(1.4127);">2</div>
<div class="t" style="left:420.00px;top:373px;font-size:11px;font-weight:bold;color:#000;transform:scaleX(1.0800);">1.003</div>
<div class="t" style="left:509.00px;top:373px;font-size:11px;font-weight:bold;color:#000;transform:scaleX(1.0736);">leichte Verunreinigungen von Staub, vereinzelten Putzspritzern und dgl....</div>
<div class="t" style="left:1099.50px;top:373px;font-size:11px;font-weight:bold;color:#000;transform:scaleX(0.9713);">m</div>
<div class="t" style="left:1110.00px;top:374px;font-size:7px;font-weight:bold;color:#000;transform:scaleX(1.4127);">2</div>
<div class="t" style="left:420.00px;top:427px;font-size:11px;font-weight:bold;color:#000;transform:scaleX(1.0800);">1.004</div>
<div class="t" style="left:509.00px;top:427px;font-size:11px;font-weight:bold;color:#000;transform:scaleX(1.0636);">Dispersionsfarbe nach DIN EN 13300 Klasse 3, matt, 2 x gut deckend str...</div>
<div class="t" style="left:1099.50px;top:427px;font-size:11px;font-weight:bold;color:#000;transform:scaleX(0.9713);">m</div>
<div class="t" style="left:1110.00px;top:428px;font-size:7px;font-weight:bold;color:#000;transform:scaleX(1.4127);">2</div>
<div class="t" style="left:420.00px;top:481px;font-size:11px;font-weight:bold;color:#000;transform:scaleX(1.0800);">1.005</div>
<div class="t" style="left:509.00px;top:481px;font-size:11px;font-weight:bold;color:#000;transform:scaleX(1.0763);">mit Tiefgrund, wasserverdünnbar grundieren</div>
<div class="t" style="left:1099.50px;top:481px;font-size:11px;font-weight:bold;color:#000;transform:scaleX(0.9713);">m</div>
<div class="t" style="left:1110.00px;top:482px;font-size:7px;font-weight:bold;color:#000;transform:scaleX(1.4127);">2</div>
<div class="t" style="left:420.00px;top:571px;font-size:11px;font-weight:bold;color:#000;transform:scaleX(1.0800);">1.006</div>
<div class="t" style="left:509.00px;top:571px;font-size:11px;font-weight:bold;color:#000;transform:scaleX(1.0576);">Dispersionsfarbe nach DIN EN 13300 Klasse 3, matt, einmaliger Anstrich ...</div>
<div class="t" style="left:1099.50px;top:571px;font-size:11px;font-weight:bold;color:#000;transform:scaleX(0.9713);">m</div>
<div class="t" style="left:1110.00px;top:572px;font-size:7px;font-weight:bold;color:#000;transform:scaleX(1.4127);">2</div>
<div class="t" style="left:509.00px;top:283px;font-size:11px;color:#000;transform:scaleX(1.0478);">(6,50 + 8,50) * 2,50</div>
<div class="t" style="left:1036.94px;top:283px;font-size:11px;color:#000;">2</div>
<div class="t" style="left:1065.47px;top:283px;font-size:11px;color:#000;">75,00</div>
<div class="t" style="left:1161.44px;top:283px;font-size:11px;color:#000;">1</div>
<div class="t" style="left:509.00px;top:337px;font-size:11px;color:#000;transform:scaleX(1.0550);">6,50 * 5,60 + 6,50 * 3,40 / 2 + 8,50 * 5,60</div>
<div class="t" style="left:1036.94px;top:337px;font-size:11px;color:#000;">2</div>
<div class="t" style="left:1059.35px;top:337px;font-size:11px;color:#000;">190,10</div>
<div class="t" style="left:1161.44px;top:337px;font-size:11px;color:#000;">1</div>
<div class="t" style="left:509.00px;top:391px;font-size:11px;color:#000;transform:scaleX(0.8990);">50</div>
<div class="t" style="left:1065.47px;top:391px;font-size:11px;color:#000;">50,00</div>
<div class="t" style="left:1161.44px;top:391px;font-size:11px;color:#000;">1</div>
<div class="t" style="left:509.00px;top:445px;font-size:11px;color:#000;transform:scaleX(1.0550);">6,50 * 5,60 + 6,50 * 3,40 / 2 + 8,50 * 5,60</div>
<div class="t" style="left:1065.47px;top:445px;font-size:11px;color:#000;">95,05</div>
<div class="t" style="left:1161.44px;top:445px;font-size:11px;color:#000;">1</div>
<div class="t" style="left:509.00px;top:517px;font-size:11px;color:#000;transform:scaleX(1.0693);">(1,2 + 2 * 1,4) * 0,16</div>
<div class="t" style="left:1036.94px;top:517px;font-size:11px;color:#000;">5</div>
<div class="t" style="left:1071.59px;top:517px;font-size:11px;color:#000;">3,20</div>
<div class="t" style="left:1161.44px;top:517px;font-size:11px;color:#000;">2</div>
<div class="t" style="left:509.00px;top:535px;font-size:11px;color:#000;transform:scaleX(1.0689);">(2,4 + 2 * 1,85) * 0,16 + (0,93 + 2 * 1,4) * 0,16</div>
<div class="t" style="left:1036.94px;top:535px;font-size:11px;color:#000;">2</div>
<div class="t" style="left:1071.59px;top:535px;font-size:11px;color:#000;">3,14</div>
<div class="t" style="left:1161.44px;top:535px;font-size:11px;color:#000;">2</div>
<div class="t" style="left:509.00px;top:589px;font-size:11px;color:#000;transform:scaleX(1.0693);">(1,2 + 2 * 1,4) * 0,16</div>
<div class="t" style="left:1036.94px;top:589px;font-size:11px;color:#000;">5</div>
<div class="t" style="left:1071.59px;top:589px;font-size:11px;color:#000;">3,20</div>
<div class="t" style="left:1161.44px;top:589px;font-size:11px;color:#000;">2</div>
<div class="t" style="left:509.00px;top:607px;font-size:11px;color:#000;transform:scaleX(1.0622);">(2,4 + 2 * 1,85) * 0,16</div>
<div class="t" style="left:1036.94px;top:607px;font-size:11px;color:#000;">2</div>
<div class="t" style="left:1071.59px;top:607px;font-size:11px;color:#000;">1,96</div>
<div class="t" style="left:1161.44px;top:607px;font-size:11px;color:#000;">2</div>
<div class="t" style="left:509.00px;top:625px;font-size:11px;color:#000;transform:scaleX(1.0622);">(0,93 + 2 * 1,4) * 0,16</div>
<div class="t" style="left:1036.94px;top:625px;font-size:11px;color:#000;">2</div>
<div class="t" style="left:1071.59px;top:625px;font-size:11px;color:#000;">1,20</div>
<div class="t" style="left:1161.44px;top:625px;font-size:11px;color:#000;">2</div>
<div class="t" style="left:509.00px;top:499px;font-size:11px;color:#008000;transform:scaleX(0.9765);">Nur Fenster- und Türeinfassungen</div>
<div class="t" style="left:509.00px;top:301px;font-size:11px;color:#7a7a7a;">[ = ]</div>
<div style="left:950px;top:309px;width:1px;height:1px;background:#8a6f9a"></div>
<div style="left:953px;top:309px;width:1px;height:1px;background:#8a6f9a"></div>
<div style="left:956px;top:309px;width:1px;height:1px;background:#8a6f9a"></div>
<div style="left:984px;top:309px;width:1px;height:1px;background:#8a6f9a"></div>
<div style="left:987px;top:309px;width:1px;height:1px;background:#8a6f9a"></div>
<div style="left:990px;top:309px;width:1px;height:1px;background:#8a6f9a"></div>
<div style="left:1018px;top:309px;width:1px;height:1px;background:#8a6f9a"></div>
<div style="left:1021px;top:309px;width:1px;height:1px;background:#8a6f9a"></div>
<div style="left:1024px;top:309px;width:1px;height:1px;background:#8a6f9a"></div>
<div class="t" style="left:509.00px;top:355px;font-size:11px;color:#7a7a7a;">[ = ]</div>
<div style="left:950px;top:363px;width:1px;height:1px;background:#8a6f9a"></div>
<div style="left:953px;top:363px;width:1px;height:1px;background:#8a6f9a"></div>
<div style="left:956px;top:363px;width:1px;height:1px;background:#8a6f9a"></div>
<div style="left:984px;top:363px;width:1px;height:1px;background:#8a6f9a"></div>
<div style="left:987px;top:363px;width:1px;height:1px;background:#8a6f9a"></div>
<div style="left:990px;top:363px;width:1px;height:1px;background:#8a6f9a"></div>
<div style="left:1018px;top:363px;width:1px;height:1px;background:#8a6f9a"></div>
<div style="left:1021px;top:363px;width:1px;height:1px;background:#8a6f9a"></div>
<div style="left:1024px;top:363px;width:1px;height:1px;background:#8a6f9a"></div>
<div class="t" style="left:509.00px;top:409px;font-size:11px;color:#7a7a7a;">[ = ]</div>
<div style="left:950px;top:417px;width:1px;height:1px;background:#8a6f9a"></div>
<div style="left:953px;top:417px;width:1px;height:1px;background:#8a6f9a"></div>
<div style="left:956px;top:417px;width:1px;height:1px;background:#8a6f9a"></div>
<div style="left:984px;top:417px;width:1px;height:1px;background:#8a6f9a"></div>
<div style="left:987px;top:417px;width:1px;height:1px;background:#8a6f9a"></div>
<div style="left:990px;top:417px;width:1px;height:1px;background:#8a6f9a"></div>
<div style="left:1018px;top:417px;width:1px;height:1px;background:#8a6f9a"></div>
<div style="left:1021px;top:417px;width:1px;height:1px;background:#8a6f9a"></div>
<div style="left:1024px;top:417px;width:1px;height:1px;background:#8a6f9a"></div>
<div class="t" style="left:509.00px;top:463px;font-size:11px;color:#7a7a7a;">[ = ]</div>
<div style="left:950px;top:471px;width:1px;height:1px;background:#8a6f9a"></div>
<div style="left:953px;top:471px;width:1px;height:1px;background:#8a6f9a"></div>
<div style="left:956px;top:471px;width:1px;height:1px;background:#8a6f9a"></div>
<div style="left:984px;top:471px;width:1px;height:1px;background:#8a6f9a"></div>
<div style="left:987px;top:471px;width:1px;height:1px;background:#8a6f9a"></div>
<div style="left:990px;top:471px;width:1px;height:1px;background:#8a6f9a"></div>
<div style="left:1018px;top:471px;width:1px;height:1px;background:#8a6f9a"></div>
<div style="left:1021px;top:471px;width:1px;height:1px;background:#8a6f9a"></div>
<div style="left:1024px;top:471px;width:1px;height:1px;background:#8a6f9a"></div>
<div class="t" style="left:509.00px;top:553px;font-size:11px;color:#7a7a7a;">[ = ]</div>
<div style="left:950px;top:561px;width:1px;height:1px;background:#8a6f9a"></div>
<div style="left:953px;top:561px;width:1px;height:1px;background:#8a6f9a"></div>
<div style="left:956px;top:561px;width:1px;height:1px;background:#8a6f9a"></div>
<div style="left:984px;top:561px;width:1px;height:1px;background:#8a6f9a"></div>
<div style="left:987px;top:561px;width:1px;height:1px;background:#8a6f9a"></div>
<div style="left:990px;top:561px;width:1px;height:1px;background:#8a6f9a"></div>
<div style="left:1018px;top:561px;width:1px;height:1px;background:#8a6f9a"></div>
<div style="left:1021px;top:561px;width:1px;height:1px;background:#8a6f9a"></div>
<div style="left:1024px;top:561px;width:1px;height:1px;background:#8a6f9a"></div>
<div class="t" style="left:509.00px;top:643px;font-size:11px;color:#7a7a7a;">[ = ]</div>
<div style="left:950px;top:651px;width:1px;height:1px;background:#8a6f9a"></div>
<div style="left:953px;top:651px;width:1px;height:1px;background:#8a6f9a"></div>
<div style="left:956px;top:651px;width:1px;height:1px;background:#8a6f9a"></div>
<div style="left:984px;top:651px;width:1px;height:1px;background:#8a6f9a"></div>
<div style="left:987px;top:651px;width:1px;height:1px;background:#8a6f9a"></div>
<div style="left:990px;top:651px;width:1px;height:1px;background:#8a6f9a"></div>
<div style="left:1018px;top:651px;width:1px;height:1px;background:#8a6f9a"></div>
<div style="left:1021px;top:651px;width:1px;height:1px;background:#8a6f9a"></div>
<div style="left:1024px;top:651px;width:1px;height:1px;background:#8a6f9a"></div>
<div style="left:420px;top:669px;width:1px;height:1px;background:#8a6f9a"></div>
<div style="left:423px;top:669px;width:1px;height:1px;background:#8a6f9a"></div>
<div style="left:426px;top:669px;width:1px;height:1px;background:#8a6f9a"></div>
<div style="left:465px;top:669px;width:1px;height:1px;background:#8a6f9a"></div>
<div style="left:468px;top:669px;width:1px;height:1px;background:#8a6f9a"></div>
<div style="left:471px;top:669px;width:1px;height:1px;background:#8a6f9a"></div>
<div style="left:307px;top:687px;width:1px;height:1px;background:#8a6f9a"></div>
<div style="left:310px;top:687px;width:1px;height:1px;background:#8a6f9a"></div>
<div style="left:313px;top:687px;width:1px;height:1px;background:#8a6f9a"></div>
<div style="left:285px;top:705px;width:1px;height:1px;background:#8a6f9a"></div>
<div style="left:288px;top:705px;width:1px;height:1px;background:#8a6f9a"></div>
<div style="left:291px;top:705px;width:1px;height:1px;background:#8a6f9a"></div>
<div style="left:307px;top:705px;width:1px;height:1px;background:#8a6f9a"></div>
<div style="left:310px;top:705px;width:1px;height:1px;background:#8a6f9a"></div>
<div style="left:313px;top:705px;width:1px;height:1px;background:#8a6f9a"></div>
<div style="left:420px;top:705px;width:1px;height:1px;background:#8a6f9a"></div>
<div style="left:423px;top:705px;width:1px;height:1px;background:#8a6f9a"></div>
<div style="left:426px;top:705px;width:1px;height:1px;background:#8a6f9a"></div>
<div style="left:465px;top:705px;width:1px;height:1px;background:#8a6f9a"></div>
<div style="left:468px;top:705px;width:1px;height:1px;background:#8a6f9a"></div>
<div style="left:471px;top:705px;width:1px;height:1px;background:#8a6f9a"></div>
<div style="left:510px;top:705px;width:1px;height:1px;background:#8a6f9a"></div>
<div style="left:513px;top:705px;width:1px;height:1px;background:#8a6f9a"></div>
<div style="left:516px;top:705px;width:1px;height:1px;background:#8a6f9a"></div>
<div style="left:950px;top:705px;width:1px;height:1px;background:#8a6f9a"></div>
<div style="left:953px;top:705px;width:1px;height:1px;background:#8a6f9a"></div>
<div style="left:956px;top:705px;width:1px;height:1px;background:#8a6f9a"></div>
<div style="left:984px;top:705px;width:1px;height:1px;background:#8a6f9a"></div>
<div style="left:987px;top:705px;width:1px;height:1px;background:#8a6f9a"></div>
<div style="left:990px;top:705px;width:1px;height:1px;background:#8a6f9a"></div>
<div style="left:1018px;top:705px;width:1px;height:1px;background:#8a6f9a"></div>
<div style="left:1021px;top:705px;width:1px;height:1px;background:#8a6f9a"></div>
<div style="left:1024px;top:705px;width:1px;height:1px;background:#8a6f9a"></div>
<div style="left:1137px;top:205px;width:55px;height:271px;border:3px solid #ffc20e;box-sizing:border-box"></div>
<div style="left:1137px;top:476px;width:55px;height:181px;border:3px solid #00a0e6;box-sizing:border-box"></div>
<div style="left:0px;top:778px;width:1277px;height:1px;background:#e8e8e8"></div>
<div style="left:0px;top:779px;width:780px;height:18px;border-top:1px solid #a0a0a0;border-left:1px solid #a0a0a0;border-right:1px solid #fff;border-bottom:1px solid #fff;box-sizing:border-box"></div>
<div style="left:783px;top:779px;width:151px;height:18px;border-top:1px solid #a0a0a0;border-left:1px solid #a0a0a0;border-right:1px solid #fff;border-bottom:1px solid #fff;box-sizing:border-box"></div>
<div class="t" style="left:787.60px;top:783px;font-size:11px;color:#000;transform:scaleX(0.9744);">Aufmaßposition.Absatzmarke</div>
<div style="left:936px;top:779px;width:61px;height:18px;border-top:1px solid #a0a0a0;border-left:1px solid #a0a0a0;border-right:1px solid #fff;border-bottom:1px solid #fff;box-sizing:border-box"></div>
<div class="t" style="left:941.60px;top:783px;font-size:11px;color:#000;transform:scaleX(0.9774);">1. Aufmaß</div>
<div style="left:999px;top:779px;width:39px;height:18px;border-top:1px solid #a0a0a0;border-left:1px solid #a0a0a0;border-right:1px solid #fff;border-bottom:1px solid #fff;box-sizing:border-box"></div>
<div class="t" style="left:1009.00px;top:783px;font-size:11px;color:#000;transform:scaleX(0.9344);">igel</div>
<div style="left:1040px;top:779px;width:38px;height:18px;border-top:1px solid #a0a0a0;border-left:1px solid #a0a0a0;border-right:1px solid #fff;border-bottom:1px solid #fff;box-sizing:border-box"></div>
<div class="t" style="left:1052.40px;top:783px;font-size:11px;color:#000;transform:scaleX(1.0625);">#5</div>
<div style="left:1080px;top:779px;width:179px;height:18px;border-top:1px solid #a0a0a0;border-left:1px solid #a0a0a0;border-right:1px solid #fff;border-bottom:1px solid #fff;box-sizing:border-box"></div>
<div class="t" style="left:1085.50px;top:783px;font-size:11px;color:#000;transform:scaleX(0.9657);">admin - Moser-Dokumentation.mdb</div>
<svg style="left:1262px;top:784px" width="14" height="14" viewBox="0 0 14 14"><path d="M13 3 L3 13 M13 7 L7 13 M13 11 L11 13" stroke="#a0a0a0" stroke-width="1.2"/></svg>
</body></html>
